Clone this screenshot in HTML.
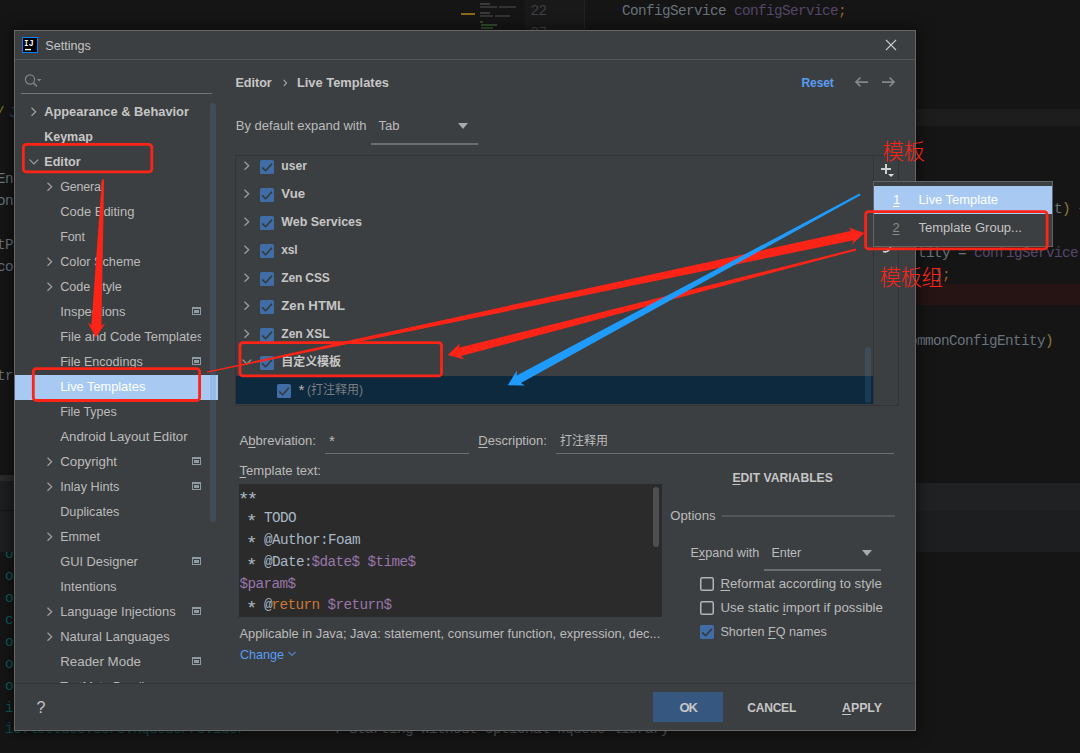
<!DOCTYPE html>
<html><head><meta charset="utf-8"><title>Settings</title>
<style>
html,body{margin:0;padding:0;background:#151515;}
#root{position:relative;width:1080px;height:753px;overflow:hidden;background:#151515;font-family:"Liberation Sans","Noto Sans CJK SC",sans-serif;}
.a{position:absolute;display:block;}
.t{position:absolute;white-space:pre;font-family:"Liberation Sans","Noto Sans CJK SC",sans-serif;}
.m{font-family:"Liberation Mono","Noto Sans CJK SC",monospace;}
i{font-style:normal;position:relative;top:4.5px;font-size:19px;line-height:0;margin:0 -1.4px;letter-spacing:0;}
u{text-decoration:underline;text-underline-offset:1.5px;text-decoration-thickness:1px;}
#dlg{position:absolute;left:14px;top:30px;width:902px;height:701px;background:#3c3f41;box-sizing:border-box;border:1px solid #676664;box-shadow:0 1px 12px 2px rgba(0,0,0,.5);}
.in{position:absolute;left:-15px;top:-31px;width:1080px;height:753px;}
#treeclip{position:absolute;left:0;top:95px;width:218px;height:588px;overflow:hidden;}
#treeclip .in2{position:absolute;left:0;top:-95px;}
</style></head><body><div id="root">
<!-- IDE background -->
<div class="a" style="left:525px;top:0;width:60px;height:30px;background:#19191a"></div>
<div class="a" style="left:584px;top:0;width:1px;height:30px;background:#222"></div>
<div class="a" style="left:461px;top:13px;width:14px;height:2px;background:#8a6a14"></div>
<div class="a" style="left:480px;top:3px;width:10px;height:2px;background:#3a3a3a"></div>
<div class="a" style="left:480px;top:6px;width:17px;height:2px;background:#333"></div><div class="a" style="left:499px;top:6px;width:17px;height:2px;background:#333"></div>
<div class="a" style="left:480px;top:12px;width:10px;height:2px;background:#3a3a3a"></div>
<div class="a" style="left:480px;top:15px;width:13px;height:2px;background:#333"></div><div class="a" style="left:495px;top:15px;width:15px;height:2px;background:#333"></div>
<div class="a" style="left:480px;top:21px;width:3px;height:2px;background:#2f4a2a"></div>
<div class="a" style="left:481px;top:24px;width:16px;height:2px;background:#2f4a2a"></div>
<div class="a" style="left:481px;top:27px;width:12px;height:2px;background:#2f4a2a"></div>
<div class="a" style="left:585px;top:109px;width:495px;height:17px;background:#1d1d1d"></div>
<div class="a" style="left:585px;top:284px;width:495px;height:21px;background:#261414"></div>
<div class="a" style="left:900px;top:483px;width:180px;height:28px;background:#202122"></div>
<div class="a" style="left:900px;top:511px;width:180px;height:41px;background:#1d1e1f"></div>
<span class="t m" style="left:622.0px;top:2px;font-size:14.3px;line-height:18px;color:#69737d;letter-spacing:-0.581px;">ConfigService</span>
<span class="t m" style="left:734.0px;top:2px;font-size:14.3px;line-height:18px;color:#56476a;letter-spacing:-0.581px;">configService</span>
<span class="t m" style="left:838.0px;top:2px;font-size:14.3px;line-height:18px;color:#9c622e;letter-spacing:-0.594px;">;</span>
<span class="t m" style="left:530.5px;top:2px;font-size:14.3px;line-height:18px;color:#3e4043;letter-spacing:-0.586px;">22</span>
<span class="t m" style="left:530.5px;top:24px;font-size:14.3px;line-height:18px;color:#3e4043;letter-spacing:-0.586px;">27</span>
<span class="t m" style="left:1054.0px;top:200px;font-size:14.3px;line-height:18px;color:#69737d;letter-spacing:-0.594px;">t</span>
<span class="t m" style="left:1062.0px;top:200px;font-size:14.3px;line-height:18px;color:#8a7a3a;letter-spacing:-0.594px;">)</span>
<span class="t m" style="left:1078.0px;top:200px;font-size:14.3px;line-height:18px;color:#69737d;letter-spacing:-0.594px;">{</span>
<span class="t m" style="left:918.0px;top:244px;font-size:14.3px;line-height:18px;color:#69737d;letter-spacing:-0.580px;">tity = </span>
<span class="t m" style="left:974.0px;top:244px;font-size:14.3px;line-height:18px;color:#56476a;letter-spacing:-0.581px;">configService</span>
<span class="t m" style="left:934.0px;top:266px;font-size:14.3px;line-height:18px;color:#69737d;letter-spacing:-0.594px;">)</span>
<span class="t m" style="left:942.0px;top:266px;font-size:14.3px;line-height:18px;color:#9c622e;letter-spacing:-0.594px;">;</span>
<span class="t m" style="left:909.0px;top:332px;font-size:14.3px;line-height:18px;color:#69737d;letter-spacing:-0.580px;">ommonConfigEntity</span>
<span class="t m" style="left:1045.0px;top:332px;font-size:14.3px;line-height:18px;color:#8a7a3a;letter-spacing:-0.594px;">)</span>
<span class="t m" style="left:-4.0px;top:104px;font-size:14.3px;line-height:18px;color:#7d7420;letter-spacing:-0.594px;">/</span>
<span class="t m" style="left:8.5px;top:104px;font-size:14.3px;line-height:18px;color:#33435e;letter-spacing:-0.594px;">J</span>
<span class="t m" style="left:-3.0px;top:170px;font-size:14.3px;line-height:18px;color:#69737d;letter-spacing:-0.583px;">Ent</span>
<span class="t m" style="left:-3.0px;top:192px;font-size:14.3px;line-height:18px;color:#69737d;letter-spacing:-0.583px;">onl</span>
<span class="t m" style="left:-3.0px;top:236px;font-size:14.3px;line-height:18px;color:#69737d;letter-spacing:-0.583px;">tPa</span>
<span class="t m" style="left:-3.0px;top:258px;font-size:14.3px;line-height:18px;color:#69737d;letter-spacing:-0.583px;">con</span>
<span class="t m" style="left:-3.0px;top:367px;font-size:14.3px;line-height:18px;color:#69737d;letter-spacing:-0.583px;">tri</span>
<span class="t m" style="left:5.0px;top:545px;font-size:14.3px;line-height:18px;color:#0d5a5a;letter-spacing:-0.594px;">o</span>
<span class="t m" style="left:5.0px;top:567px;font-size:14.3px;line-height:18px;color:#0d5a5a;letter-spacing:-0.594px;">o</span>
<span class="t m" style="left:5.0px;top:589px;font-size:14.3px;line-height:18px;color:#0d5a5a;letter-spacing:-0.594px;">o</span>
<span class="t m" style="left:5.0px;top:611px;font-size:14.3px;line-height:18px;color:#0d5a5a;letter-spacing:-0.594px;">c</span>
<span class="t m" style="left:5.0px;top:633px;font-size:14.3px;line-height:18px;color:#0d5a5a;letter-spacing:-0.594px;">o</span>
<span class="t m" style="left:5.0px;top:655px;font-size:14.3px;line-height:18px;color:#0d5a5a;letter-spacing:-0.594px;">o</span>
<span class="t m" style="left:5.0px;top:677px;font-size:14.3px;line-height:18px;color:#0d5a5a;letter-spacing:-0.594px;">o</span>
<span class="t m" style="left:5.0px;top:699px;font-size:14.3px;line-height:18px;color:#0d5a5a;letter-spacing:-0.594px;">i</span>
<span class="t m" style="left:5.0px;top:720px;font-size:14.3px;line-height:18px;color:#0d4f4f;letter-spacing:-0.580px;">io.lettuce.core.KqueueProvider</span>
<span class="t m" style="left:333.0px;top:720px;font-size:14.3px;line-height:18px;color:#555a5e;letter-spacing:-0.580px;">: Starting without optional kqueue library</span>
<div class="a" style="left:0;top:475px;width:20px;height:6px;background:#2a2a2a"></div>
<div class="a" style="left:0;top:481px;width:20px;height:71px;background:#1c1e20"></div>
<div class="a" style="left:0;top:510px;width:20px;height:1px;background:#151617"></div>
<!-- Settings dialog -->
<div id="dlg"><div class="in">
<svg class="a" style="left:22px;top:37px" width="16" height="16" viewBox="0 0 16 16"><rect x="0.5" y="0.5" width="15" height="15" fill="#000" stroke="#0a80ff"/><rect x="3" y="11.9" width="6.1" height="1.4" fill="#fff"/></svg>
<svg class="a" style="left:22px;top:37px" width="16" height="16" viewBox="0 0 16 16"><g font-family='"Liberation Mono",monospace' font-weight="700" font-size="9" fill="#fff" text-anchor="middle"><text transform="translate(4.45 9.1) scale(.78 1)">I</text><text transform="translate(9.15 9.1) scale(.92 1)">J</text></g></svg>
<svg class="a" style="left:885px;top:39px" width="12" height="12" viewBox="0 0 12 12"><path d="M1 1 L11 11 M11 1 L1 11" stroke="#c8c8c8" stroke-width="1.1"/></svg>
<div class="a" style="left:15px;top:59px;width:900px;height:1px;background:#555759"></div>
<svg class="a" style="left:24px;top:73px" width="20" height="16" viewBox="0 0 20 16"><circle cx="6" cy="6.5" r="4.6" fill="none" stroke="#808588" stroke-width="1.2"/><path d="M9.4 9.9 L13 13.4" stroke="#808588" stroke-width="1.5"/><path d="M13 6 L17.4 6 L15.2 8.4 Z" fill="#808588"/></svg>
<div class="a" style="left:21px;top:93px;width:191px;height:1px;background:#737677"></div>
<div id="treeclip"><div class="in2">
<div class="a" style="left:15px;top:375px;width:203px;height:25px;background:#a8caf2"></div>
<div class="a" style="left:210px;top:103px;width:6px;height:419px;border-radius:3px;background:rgba(84,128,184,.2)"></div>
<svg class="a" style="left:29.8px;top:105.5px" width="8" height="12" viewBox="0 0 8 12"><path d="M1.5 1.7 L5.7 5.7 L1.5 9.7" fill="none" stroke="#9c9fa1" stroke-width="1.25"/></svg>
<svg class="a" style="left:28px;top:157.5px" width="12" height="8" viewBox="0 0 12 8"><path d="M1.6 1.6 L5.9 5.9 L10.2 1.6" fill="none" stroke="#9c9fa1" stroke-width="1.25"/></svg>
<svg class="a" style="left:45.8px;top:180.5px" width="8" height="12" viewBox="0 0 8 12"><path d="M1.5 1.7 L5.7 5.7 L1.5 9.7" fill="none" stroke="#9c9fa1" stroke-width="1.25"/></svg>
<svg class="a" style="left:45.8px;top:255.5px" width="8" height="12" viewBox="0 0 8 12"><path d="M1.5 1.7 L5.7 5.7 L1.5 9.7" fill="none" stroke="#9c9fa1" stroke-width="1.25"/></svg>
<svg class="a" style="left:45.8px;top:280.5px" width="8" height="12" viewBox="0 0 8 12"><path d="M1.5 1.7 L5.7 5.7 L1.5 9.7" fill="none" stroke="#9c9fa1" stroke-width="1.25"/></svg>
<svg class="a" style="left:45.8px;top:455.5px" width="8" height="12" viewBox="0 0 8 12"><path d="M1.5 1.7 L5.7 5.7 L1.5 9.7" fill="none" stroke="#9c9fa1" stroke-width="1.25"/></svg>
<svg class="a" style="left:45.8px;top:480.5px" width="8" height="12" viewBox="0 0 8 12"><path d="M1.5 1.7 L5.7 5.7 L1.5 9.7" fill="none" stroke="#9c9fa1" stroke-width="1.25"/></svg>
<svg class="a" style="left:45.8px;top:530.5px" width="8" height="12" viewBox="0 0 8 12"><path d="M1.5 1.7 L5.7 5.7 L1.5 9.7" fill="none" stroke="#9c9fa1" stroke-width="1.25"/></svg>
<svg class="a" style="left:45.8px;top:605.5px" width="8" height="12" viewBox="0 0 8 12"><path d="M1.5 1.7 L5.7 5.7 L1.5 9.7" fill="none" stroke="#9c9fa1" stroke-width="1.25"/></svg>
<svg class="a" style="left:45.8px;top:630.5px" width="8" height="12" viewBox="0 0 8 12"><path d="M1.5 1.7 L5.7 5.7 L1.5 9.7" fill="none" stroke="#9c9fa1" stroke-width="1.25"/></svg>
<svg class="a" style="left:192px;top:307.0px" width="9" height="8" viewBox="0 0 9 8"><path d="M0 0 H9 V8 H0 Z M1 2 V7 H8 V2 Z" fill="#8f9ba3" fill-rule="evenodd"/><rect x="2" y="3" width="5" height="3" fill="#8f9ba3"/></svg>
<svg class="a" style="left:192px;top:357.0px" width="9" height="8" viewBox="0 0 9 8"><path d="M0 0 H9 V8 H0 Z M1 2 V7 H8 V2 Z" fill="#8f9ba3" fill-rule="evenodd"/><rect x="2" y="3" width="5" height="3" fill="#8f9ba3"/></svg>
<svg class="a" style="left:192px;top:457.0px" width="9" height="8" viewBox="0 0 9 8"><path d="M0 0 H9 V8 H0 Z M1 2 V7 H8 V2 Z" fill="#8f9ba3" fill-rule="evenodd"/><rect x="2" y="3" width="5" height="3" fill="#8f9ba3"/></svg>
<svg class="a" style="left:192px;top:482.0px" width="9" height="8" viewBox="0 0 9 8"><path d="M0 0 H9 V8 H0 Z M1 2 V7 H8 V2 Z" fill="#8f9ba3" fill-rule="evenodd"/><rect x="2" y="3" width="5" height="3" fill="#8f9ba3"/></svg>
<svg class="a" style="left:192px;top:557.0px" width="9" height="8" viewBox="0 0 9 8"><path d="M0 0 H9 V8 H0 Z M1 2 V7 H8 V2 Z" fill="#8f9ba3" fill-rule="evenodd"/><rect x="2" y="3" width="5" height="3" fill="#8f9ba3"/></svg>
<svg class="a" style="left:192px;top:607.0px" width="9" height="8" viewBox="0 0 9 8"><path d="M0 0 H9 V8 H0 Z M1 2 V7 H8 V2 Z" fill="#8f9ba3" fill-rule="evenodd"/><rect x="2" y="3" width="5" height="3" fill="#8f9ba3"/></svg>
<svg class="a" style="left:192px;top:657.0px" width="9" height="8" viewBox="0 0 9 8"><path d="M0 0 H9 V8 H0 Z M1 2 V7 H8 V2 Z" fill="#8f9ba3" fill-rule="evenodd"/><rect x="2" y="3" width="5" height="3" fill="#8f9ba3"/></svg>
<div class="a" style="left:0;top:95px;width:201px;height:600px;overflow:hidden"><div class="a" style="left:0;top:-95px"><span class="t" style="left:60.2px;top:179px;font-size:12.5px;line-height:16px;color:#bbbbbb;letter-spacing:-0.167px;">General</span>
<span class="t" style="left:60.2px;top:203px;font-size:12.96px;line-height:17px;color:#bbbbbb;">Code Editing</span>
<span class="t" style="left:60.2px;top:229px;font-size:12.5px;line-height:16px;color:#bbbbbb;letter-spacing:-0.079px;">Font</span>
<span class="t" style="left:60.2px;top:254px;font-size:12.69px;line-height:16px;color:#bbbbbb;">Color Scheme</span>
<span class="t" style="left:60.2px;top:279px;font-size:12.61px;line-height:16px;color:#bbbbbb;">Code Style</span>
<span class="t" style="left:60.2px;top:303px;font-size:12.91px;line-height:17px;color:#bbbbbb;">Inspections</span>
<span class="t" style="left:60.2px;top:328px;font-size:12.97px;line-height:17px;color:#bbbbbb;">File and Code Templates</span>
<span class="t" style="left:60.2px;top:354px;font-size:12.58px;line-height:16px;color:#bbbbbb;">File Encodings</span>
<span class="t" style="left:60.2px;top:378px;font-size:12.81px;line-height:17px;color:#ffffff;">Live Templates</span>
<span class="t" style="left:60.2px;top:404px;font-size:12.5px;line-height:16px;color:#bbbbbb;letter-spacing:-0.025px;">File Types</span>
<span class="t" style="left:60.2px;top:428px;font-size:13.26px;line-height:17px;color:#bbbbbb;">Android Layout Editor</span>
<span class="t" style="left:60.2px;top:453px;font-size:13.29px;line-height:17px;color:#bbbbbb;">Copyright</span>
<span class="t" style="left:60.2px;top:479px;font-size:12.7px;line-height:16px;color:#bbbbbb;">Inlay Hints</span>
<span class="t" style="left:60.2px;top:504px;font-size:12.7px;line-height:16px;color:#bbbbbb;">Duplicates</span>
<span class="t" style="left:60.2px;top:529px;font-size:12.54px;line-height:16px;color:#bbbbbb;">Emmet</span>
<span class="t" style="left:60.2px;top:553px;font-size:12.83px;line-height:17px;color:#bbbbbb;">GUI Designer</span>
<span class="t" style="left:60.2px;top:578px;font-size:13.03px;line-height:17px;color:#bbbbbb;">Intentions</span>
<span class="t" style="left:60.2px;top:603px;font-size:12.9px;line-height:17px;color:#bbbbbb;">Language Injections</span>
<span class="t" style="left:60.2px;top:628px;font-size:12.96px;line-height:17px;color:#bbbbbb;">Natural Languages</span>
<span class="t" style="left:60.2px;top:653px;font-size:13.3px;line-height:17px;color:#bbbbbb;letter-spacing:0.018px;">Reader Mode</span>
<span class="t" style="left:60.2px;top:679px;font-size:12.5px;line-height:16px;color:#bbbbbb;letter-spacing:-0.161px;">TextMate Bundles</span></div></div>
</div></div>
<svg class="a" style="left:281px;top:76.8px" width="8" height="12" viewBox="0 0 8 12"><path d="M2.8 3 L5.6 6 L2.8 9" fill="none" stroke="#9da0a2" stroke-width="1.1"/></svg>
<svg class="a" style="left:854px;top:76px" width="15" height="12" viewBox="0 0 15 12"><path d="M14 6 H2 M6.5 1.5 L2 6 L6.5 10.5" fill="none" stroke="#83868a" stroke-width="1.75"/></svg>
<svg class="a" style="left:881px;top:76px" width="15" height="12" viewBox="0 0 15 12"><path d="M1 6 H13 M8.5 1.5 L13 6 L8.5 10.5" fill="none" stroke="#83868a" stroke-width="1.75"/></svg>
<div class="a" style="left:371px;top:143px;width:107px;height:2px;background:#6b6e70"></div>
<svg class="a" style="left:458px;top:123px" width="10" height="6" viewBox="0 0 10 6"><path d="M0 0 H10 L5 6 Z" fill="#a7aaac"/></svg>
<!-- table -->
<div class="a" style="left:235px;top:155px;width:664px;height:251px;box-sizing:border-box;border:1px solid #323436"></div>
<div class="a" style="left:873px;top:156px;width:1px;height:249px;background:#323436"></div>
<div class="a" style="left:236px;top:376px;width:637px;height:28px;background:#0d293e"></div>
<div class="a" style="left:865px;top:347px;width:6px;height:56px;border-radius:3px;background:rgba(84,128,184,.2)"></div>
<svg class="a" style="left:242.6px;top:159.6px" width="8" height="12" viewBox="0 0 8 12"><path d="M1.5 1.7 L5.7 5.7 L1.5 9.7" fill="none" stroke="#9c9fa1" stroke-width="1.25"/></svg>
<svg class="a" style="left:260px;top:159.9px" width="14" height="14" viewBox="0 0 14 14"><rect width="14" height="14" rx="1.6" fill="#406da6"/><path d="M2.2 7.4 L5.6 10.7 L12 3.7" fill="none" stroke="#35383a" stroke-width="1.6"/></svg>
<svg class="a" style="left:242.6px;top:187.6px" width="8" height="12" viewBox="0 0 8 12"><path d="M1.5 1.7 L5.7 5.7 L1.5 9.7" fill="none" stroke="#9c9fa1" stroke-width="1.25"/></svg>
<svg class="a" style="left:260px;top:187.9px" width="14" height="14" viewBox="0 0 14 14"><rect width="14" height="14" rx="1.6" fill="#406da6"/><path d="M2.2 7.4 L5.6 10.7 L12 3.7" fill="none" stroke="#35383a" stroke-width="1.6"/></svg>
<svg class="a" style="left:242.6px;top:215.6px" width="8" height="12" viewBox="0 0 8 12"><path d="M1.5 1.7 L5.7 5.7 L1.5 9.7" fill="none" stroke="#9c9fa1" stroke-width="1.25"/></svg>
<svg class="a" style="left:260px;top:215.9px" width="14" height="14" viewBox="0 0 14 14"><rect width="14" height="14" rx="1.6" fill="#406da6"/><path d="M2.2 7.4 L5.6 10.7 L12 3.7" fill="none" stroke="#35383a" stroke-width="1.6"/></svg>
<svg class="a" style="left:242.6px;top:243.6px" width="8" height="12" viewBox="0 0 8 12"><path d="M1.5 1.7 L5.7 5.7 L1.5 9.7" fill="none" stroke="#9c9fa1" stroke-width="1.25"/></svg>
<svg class="a" style="left:260px;top:243.9px" width="14" height="14" viewBox="0 0 14 14"><rect width="14" height="14" rx="1.6" fill="#406da6"/><path d="M2.2 7.4 L5.6 10.7 L12 3.7" fill="none" stroke="#35383a" stroke-width="1.6"/></svg>
<svg class="a" style="left:242.6px;top:271.6px" width="8" height="12" viewBox="0 0 8 12"><path d="M1.5 1.7 L5.7 5.7 L1.5 9.7" fill="none" stroke="#9c9fa1" stroke-width="1.25"/></svg>
<svg class="a" style="left:260px;top:271.90000000000003px" width="14" height="14" viewBox="0 0 14 14"><rect width="14" height="14" rx="1.6" fill="#406da6"/><path d="M2.2 7.4 L5.6 10.7 L12 3.7" fill="none" stroke="#35383a" stroke-width="1.6"/></svg>
<svg class="a" style="left:242.6px;top:299.6px" width="8" height="12" viewBox="0 0 8 12"><path d="M1.5 1.7 L5.7 5.7 L1.5 9.7" fill="none" stroke="#9c9fa1" stroke-width="1.25"/></svg>
<svg class="a" style="left:260px;top:299.90000000000003px" width="14" height="14" viewBox="0 0 14 14"><rect width="14" height="14" rx="1.6" fill="#406da6"/><path d="M2.2 7.4 L5.6 10.7 L12 3.7" fill="none" stroke="#35383a" stroke-width="1.6"/></svg>
<svg class="a" style="left:242.6px;top:327.6px" width="8" height="12" viewBox="0 0 8 12"><path d="M1.5 1.7 L5.7 5.7 L1.5 9.7" fill="none" stroke="#9c9fa1" stroke-width="1.25"/></svg>
<svg class="a" style="left:260px;top:327.90000000000003px" width="14" height="14" viewBox="0 0 14 14"><rect width="14" height="14" rx="1.6" fill="#406da6"/><path d="M2.2 7.4 L5.6 10.7 L12 3.7" fill="none" stroke="#35383a" stroke-width="1.6"/></svg>
<svg class="a" style="left:240.6px;top:357.8px" width="12" height="8" viewBox="0 0 12 8"><path d="M1.6 1.6 L5.9 5.9 L10.2 1.6" fill="none" stroke="#9c9fa1" stroke-width="1.25"/></svg>
<svg class="a" style="left:260px;top:355.8px" width="14" height="14" viewBox="0 0 14 14"><rect width="14" height="14" rx="1.6" fill="#406da6"/><path d="M2.2 7.4 L5.6 10.7 L12 3.7" fill="none" stroke="#35383a" stroke-width="1.6"/></svg>
<svg class="a" style="left:277px;top:383.8px" width="14" height="14" viewBox="0 0 14 14"><rect width="14" height="14" rx="1.6" fill="#406da6"/><path d="M2.2 7.4 L5.6 10.7 L12 3.7" fill="none" stroke="#35383a" stroke-width="1.6"/></svg>
<svg class="a" style="left:880px;top:163px" width="15" height="15" viewBox="0 0 15 15"><path d="M6 1 V11 M1 6 H11" stroke="#cdcfd0" stroke-width="2"/><path d="M8.1 11 H14 L11.05 14.1 Z" fill="#dedfe0"/></svg>
<svg class="a" style="left:882px;top:246px" width="10" height="8" viewBox="0 0 10 8"><path d="M1 5.5 Q6.5 7 8.5 1" fill="none" stroke="#d0d2d4" stroke-width="1.8"/></svg>
<!-- form -->
<div class="a" style="left:325px;top:453px;width:144px;height:1px;background:#6b6e70"></div>
<div class="a" style="left:556px;top:453px;width:338px;height:1px;background:#6b6e70"></div>
<div class="a" style="left:239px;top:484px;width:422.5px;height:132.5px;background:#2b2b2b"></div>
<div class="a" style="left:653px;top:486.5px;width:6px;height:60.5px;border-radius:3px;background:#4d4f50"></div>
<div class="a" style="left:722px;top:515px;width:173px;height:2px;background:#54575a"></div>
<div class="a" style="left:764px;top:569px;width:117px;height:2px;background:#6b6e70"></div>
<svg class="a" style="left:861.5px;top:549.5px" width="10" height="6" viewBox="0 0 10 6"><path d="M0 0 H10 L5 6 Z" fill="#a7aaac"/></svg>
<svg class="a" style="left:700px;top:577px" width="14" height="14" viewBox="0 0 14 14"><rect x="0.75" y="0.75" width="12.5" height="12.5" rx="1.6" fill="none" stroke="#b2b4b6" stroke-width="1.5"/></svg><svg class="a" style="left:700px;top:601px" width="14" height="14" viewBox="0 0 14 14"><rect x="0.75" y="0.75" width="12.5" height="12.5" rx="1.6" fill="none" stroke="#b2b4b6" stroke-width="1.5"/></svg><svg class="a" style="left:700px;top:625px" width="14" height="14" viewBox="0 0 14 14"><rect width="14" height="14" rx="1.6" fill="#406da6"/><path d="M2.2 7.4 L5.6 10.7 L12 3.7" fill="none" stroke="#35383a" stroke-width="1.6"/></svg>
<svg class="a" style="left:287px;top:650px" width="10" height="8" viewBox="0 0 10 8"><path d="M1.5 2 L5 5.5 L8.5 2" fill="none" stroke="#5183c4" stroke-width="1.2"/></svg>
<div class="a" style="left:15px;top:683px;width:900px;height:1px;background:#323537"></div>
<div class="a" style="left:653px;top:692px;width:70px;height:30px;background:#365880"></div>
<span class="t m" style="left:239.5px;top:487px;font-size:14.3px;line-height:18px;color:#a9b7c6;letter-spacing:-0.594px;"><i>*</i><i>*</i></span>
<span class="t m" style="left:239.5px;top:509px;font-size:14.3px;line-height:18px;color:#a9b7c6;letter-spacing:-0.585px;"> <i>*</i> TODO</span>
<span class="t m" style="left:239.5px;top:531px;font-size:14.3px;line-height:18px;color:#a9b7c6;letter-spacing:-0.582px;"> <i>*</i> @Author:Foam</span>
<span class="t m" style="left:239.5px;top:553px;font-size:14.3px;line-height:18px;color:#a9b7c6;letter-spacing:-0.583px;"> <i>*</i> @Date:</span>
<span class="t m" style="left:311.5px;top:553px;font-size:14.3px;line-height:18px;color:#9876aa;letter-spacing:-0.581px;">$date$</span>
<span class="t m" style="left:367.5px;top:553px;font-size:14.3px;line-height:18px;color:#9876aa;letter-spacing:-0.581px;">$time$</span>
<span class="t m" style="left:239.5px;top:575px;font-size:14.3px;line-height:18px;color:#9876aa;letter-spacing:-0.580px;">$param$</span>
<span class="t m" style="left:239.5px;top:596px;font-size:14.3px;line-height:18px;color:#a9b7c6;letter-spacing:-0.590px;"> <i>*</i> @</span>
<span class="t m" style="left:271.5px;top:596px;font-size:14.3px;line-height:18px;color:#cc7832;letter-spacing:-0.581px;">return</span>
<span class="t m" style="left:327.5px;top:596px;font-size:14.3px;line-height:18px;color:#9876aa;letter-spacing:-0.580px;">$return$</span>
<span class="t" style="left:45.3px;top:38px;font-size:12.59px;line-height:16px;color:#c4c4c4;">Settings</span>
<span class="t" style="left:44.2px;top:103px;font-size:12.83px;line-height:17px;color:#c6c6c6;font-weight:700;">Appearance &amp; Behavior</span>
<span class="t" style="left:44.2px;top:129px;font-size:12.49px;line-height:16px;color:#c6c6c6;font-weight:700;">Keymap</span>
<span class="t" style="left:44.2px;top:154px;font-size:12.67px;line-height:16px;color:#c6c6c6;font-weight:700;">Editor</span>
<span class="t" style="left:235.4px;top:75px;font-size:12.6px;line-height:16px;color:#c6c6c6;font-weight:700;">Editor</span>
<span class="t" style="left:296.9px;top:74px;font-size:12.88px;line-height:17px;color:#c6c6c6;font-weight:700;">Live Templates</span>
<span class="t" style="left:801.5px;top:75px;font-size:12.0px;line-height:16px;color:#589df6;letter-spacing:-0.079px;font-weight:700;">Reset</span>
<span class="t" style="left:235.8px;top:117px;font-size:13.0px;line-height:17px;color:#bbbbbb;">By default expand with</span>
<span class="t" style="left:378.5px;top:117px;font-size:13.02px;line-height:17px;color:#bbbbbb;">Tab</span>
<span class="t" style="left:281.3px;top:158px;font-size:12.16px;line-height:16px;color:#c6c6c6;font-weight:700;">user</span>
<span class="t" style="left:281.3px;top:185px;font-size:13.2px;line-height:17px;color:#c6c6c6;letter-spacing:0.094px;font-weight:700;">Vue</span>
<span class="t" style="left:281.3px;top:214px;font-size:12.44px;line-height:16px;color:#c6c6c6;font-weight:700;">Web Services</span>
<span class="t" style="left:281.3px;top:242px;font-size:12.0px;line-height:16px;color:#c6c6c6;letter-spacing:-0.229px;font-weight:700;">xsl</span>
<span class="t" style="left:281.3px;top:270px;font-size:12.0px;line-height:16px;color:#c6c6c6;letter-spacing:-0.151px;font-weight:700;">Zen CSS</span>
<span class="t" style="left:281.3px;top:297px;font-size:13.18px;line-height:17px;color:#c6c6c6;font-weight:700;">Zen HTML</span>
<span class="t" style="left:281.3px;top:326px;font-size:12.07px;line-height:16px;color:#c6c6c6;font-weight:700;">Zen XSL</span>
<span class="t" style="left:281.3px;top:354px;font-size:12px;line-height:16px;color:#c6c6c6;letter-spacing:-0.063px;font-weight:700;">自定义模板</span>
<span class="t" style="left:298.6px;top:380px;font-size:15px;line-height:19px;color:#bbbbbb;letter-spacing:-0.044px;">*</span>
<span class="t" style="left:307.0px;top:382px;font-size:12px;line-height:16px;color:#7a7d80;">(打注释用)</span>
<span class="t" style="left:239.5px;top:432px;font-size:13.1px;line-height:17px;color:#bbbbbb;">A<u>b</u>breviation:</span>
<span class="t" style="left:328.9px;top:431px;font-size:15px;line-height:19px;color:#bbbbbb;letter-spacing:-0.044px;">*</span>
<span class="t" style="left:478.3px;top:432px;font-size:13.01px;line-height:17px;color:#bbbbbb;"><u>D</u>escription:</span>
<span class="t" style="left:560.0px;top:433px;font-size:12px;line-height:16px;color:#bbbbbb;">打注释用</span>
<span class="t" style="left:239.5px;top:462px;font-size:13.09px;line-height:17px;color:#bbbbbb;"><u>T</u>emplate text:</span>
<span class="t" style="left:732.4px;top:470px;font-size:12.17px;line-height:16px;color:#c6c6c6;font-weight:700;"><u>E</u>DIT VARIABLES</span>
<span class="t" style="left:670.2px;top:507px;font-size:13.17px;line-height:17px;color:#bbbbbb;">Options</span>
<span class="t" style="left:690.4px;top:545px;font-size:12.66px;line-height:16px;color:#bbbbbb;">E<u>x</u>pand with</span>
<span class="t" style="left:771.6px;top:545px;font-size:12.5px;line-height:16px;color:#bbbbbb;letter-spacing:-0.097px;">Enter</span>
<span class="t" style="left:720.4px;top:575px;font-size:13.28px;line-height:17px;color:#bbbbbb;"><u>R</u>eformat according to style</span>
<span class="t" style="left:720.4px;top:599px;font-size:13.3px;line-height:17px;color:#bbbbbb;letter-spacing:0.025px;">Use static <u>i</u>mport if possible</span>
<span class="t" style="left:720.4px;top:624px;font-size:12.58px;line-height:16px;color:#bbbbbb;">Shorten <u>F</u>Q names</span>
<span class="t" style="left:239.5px;top:625px;font-size:12.84px;line-height:17px;color:#bbbbbb;">Applicable in Java; Java: statement, consumer function, expression, dec...</span>
<span class="t" style="left:240.0px;top:647px;font-size:12.56px;line-height:16px;color:#589df6;">Change</span>
<span class="t" style="left:679.4px;top:699px;font-size:13px;line-height:17px;color:#c6c6c6;letter-spacing:-1.000px;font-weight:700;">OK</span>
<span class="t" style="left:747.3px;top:700px;font-size:12.0px;line-height:16px;color:#c6c6c6;letter-spacing:-0.217px;font-weight:700;">CANCEL</span>
<span class="t" style="left:842.0px;top:700px;font-size:12.34px;line-height:16px;color:#c6c6c6;font-weight:700;"><u>A</u>PPLY</span>
<span class="t" style="left:36.6px;top:698px;font-size:16px;line-height:19px;color:#c4c4c4;letter-spacing:-0.906px;">?</span>
</div></div>
<!-- popup -->
<div class="a" style="left:873px;top:181px;width:180px;height:66px;box-sizing:border-box;background:#3c3f41;border:1px solid #616365"></div>
<div class="a" style="left:874px;top:186px;width:178px;height:28px;background:#a8caf2"></div>
<span class="t" style="left:893.0px;top:191px;font-size:13px;line-height:17px;color:#ffffff;letter-spacing:-1.000px;"><u>1</u></span>
<span class="t" style="left:918.6px;top:191px;font-size:12.91px;line-height:17px;color:#ffffff;">Live Template</span>
<span class="t" style="left:892.5px;top:219px;font-size:13px;line-height:17px;color:#8c8c8c;letter-spacing:-0.234px;"><u>2</u></span>
<span class="t" style="left:918.5px;top:219px;font-size:13.02px;line-height:17px;color:#c4c4c4;">Template Group...</span>
<!-- annotations -->
<svg class="a" style="left:0;top:0" width="1080" height="753" viewBox="0 0 1080 753">
<polygon fill="#fb2417" points="101.9,179.4 91.4,325.1 87.8,322.6 95.8,337.5 105.2,323.4 101.4,325.5 104.1,179.6"/>
<polygon fill="#fb2417" points="207.1,372.8 853.5,240.3 852.0,244.5 864.4,233.0 848.4,227.5 851.5,230.8 206.9,371.6"/>
<polygon fill="#fb2417" points="855.8,248.6 458.8,347.8 460.0,343.2 447.8,355.1 464.3,359.6 461.0,356.1 856.2,250.4"/>
<polygon fill="#1e9bfc" points="859.5,193.4 516.7,375.4 516.8,370.6 507.8,385.2 524.9,385.6 520.9,383.1 860.5,195.2"/>
<g fill="none" stroke="#fb2417" stroke-width="2.8">
<rect x="23.4" y="144.3" width="128.4" height="27.6" rx="3"/>
<rect x="33.3" y="368.7" width="166.3" height="31.8" rx="3"/>
<rect x="240" y="342.7" width="201.5" height="33.2" rx="3"/>
<rect x="865.6" y="211.6" width="181.5" height="37.3" rx="3"/>
</g></svg>
<span class="t" style="left:882.5px;top:139px;font-size:21.5px;line-height:26px;color:#fb2417;letter-spacing:-0.508px;font-weight:300;">模板</span>
<span class="t" style="left:879.5px;top:265px;font-size:21.5px;line-height:26px;color:#fb2417;letter-spacing:-0.505px;font-weight:300;">模板组</span>
</div></body></html>
